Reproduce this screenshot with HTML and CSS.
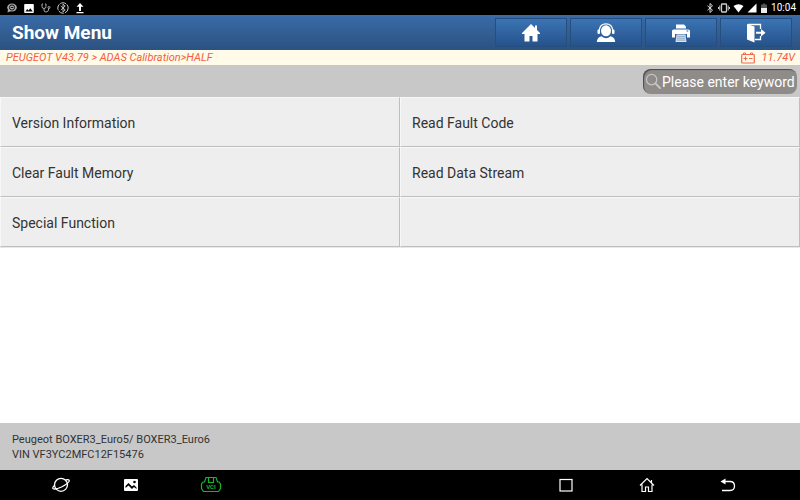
FILE: index.html
```
<!DOCTYPE html>
<html lang="en">
<head>
  <meta charset="UTF-8">
  <meta name="viewport" content="width=device-width, initial-scale=1.0">
  <title>Show Menu</title>
  <link rel="stylesheet" href="styles.css">
</head>
<body>
  <div class="screen">
    <div class="status-bar">
      <div class="status-group notifications">
        <svg width="12" height="12" viewBox="0 0 12 12"><ellipse cx="6" cy="5.5" rx="4.8" ry="4" fill="#aaa"/><path d="M2 7L1.6 10.5L5 9Z" fill="#aaa"/><circle cx="6" cy="5.5" r="2.6" fill="none" stroke="#111"/><path d="M4.8 5.5h2.6" stroke="#111"/></svg>
        <svg width="12" height="12" viewBox="0 0 12 12"><path d="M2 2h8a.8.8 0 0 1 .8.8v7.4a.8.8 0 0 1-.8.8H2a.8.8 0 0 1-.8-.8V2.800A.8.8 0 0 1 2 2zM2.500 9.500h7.200L7.300 6.200L5.500 8.400L4.200 7Z" fill="#fff" fill-rule="evenodd"/></svg>
        <svg width="12" height="12" viewBox="0 0 12 12" fill="none" stroke="#aaa"><path d="M3 2H2v2.500q0 2 2 2t2-2V2H5M4 6.500V8q0 2 2 2t2.500-2V6.500"/><circle cx="9" cy="5.500" r="1"/></svg>
        <svg width="12" height="12" viewBox="0 0 12 12" fill="none" stroke="#ccc"><circle cx="6" cy="6" r="5.200" stroke-dasharray="6 1"/><path d="M3.800 4l4.400 4L6 9.800V2.200L8.200 4L3.800 8" stroke-width=".9"/></svg>
        <svg width="12" height="12" viewBox="0 0 12 12"><path d="M6 1L9.500 4.800H7V9H5V4.800H2.500ZM2.500 10h7v1.200h-7Z" fill="#fff"/></svg>
      </div>
      <div class="status-group">
        <svg width="10" height="12" viewBox="0 0 10 12" fill="none" stroke="#ddd"><path d="M2.500 3.800l5 4.400L5 10.500v-9L7.500 3.800l-5 4.400"/></svg>
        <svg width="12" height="12" viewBox="0 0 12 12" fill="none" stroke="#ccc"><rect x="3.500" y="2" width="5" height="8" rx=".5" stroke-width="1.300"/><path d="M1.800 3.500v5M.5 5v2M10.200 3.500v5M11.500 5v2"/></svg>
        <svg width="11" height="12" viewBox="0 0 11 12"><path d="M.5 4Q5.500 .5 10.500 4L5.500 10.500Z" fill="#fff"/></svg>
        <svg width="10" height="12" viewBox="0 0 10 12"><path d="M9.500 1.500v9h-9Z" fill="#fff"/></svg>
        <svg width="8" height="12" viewBox="0 0 8 12"><path d="M3 1.500h2v1h2V6H1V2.500h2Z" fill="#555"/><path d="M1 6h6v5H1Z" fill="#eee"/></svg>
        <span class="clock">10:04</span>
      </div>
    </div>

    <header class="title-bar">
      <h1>Show Menu</h1>
      <div class="toolbar">
        <button type="button" class="tool-btn" aria-label="Home">
          <svg width="20" height="20" viewBox="0 0 20 20"><path d="M10 1L1 10V11H3.500V18.500H8.500V13H11.500V18.500H16.500V11H19V10L16 7V2.500H14V5Z" fill="#fff"/></svg>
        </button>
        <button type="button" class="tool-btn" aria-label="Support">
          <svg width="20" height="20" viewBox="0 0 20 20"><ellipse cx="10" cy="7.800" rx="5" ry="5.500" fill="#fff"/><path d="M3.300 8V7Q4 .8 10 .8T16.700 7V8" fill="none" stroke="#fff" stroke-width="1.200"/><rect x="1.500" y="6.500" width="2.500" height="4.500" rx="1" fill="#fff"/><rect x="16" y="6.500" width="2.500" height="4.500" rx="1" fill="#fff"/><path d="M.8 19Q1 14.500 5.500 13.300Q10 17 14.500 13.300Q19 14.500 19.200 19Z" fill="#fff"/></svg>
        </button>
        <button type="button" class="tool-btn" aria-label="Print">
          <svg width="20" height="20" viewBox="0 0 20 20"><path d="M5 1.500H13L15 3.500V5.500H5Z" fill="#fff"/><path d="M2.500 6.500H17.500Q19 6.500 19 8V14.500H16V11H4V14.500H1V8Q1 6.500 2.500 6.500Z" fill="#fff"/><path d="M15.500 8h1.800" stroke="#2d5f9c"/><path d="M5.500 11.500H14.500L15.500 19H4.500Z" fill="#dce5ef"/><path d="M6 13.300h8M5.700 15.200h8.600M5.500 17.100h9" stroke="#6686ad" stroke-width=".7"/></svg>
        </button>
        <button type="button" class="tool-btn" aria-label="Exit">
          <svg width="20" height="20" viewBox="0 0 20 20"><path d="M1 1L8.500 3.500V19.500L1 16.500Z" fill="#fff"/><path d="M2 1.500H14.500V6M14.500 13V16.500H9" fill="none" stroke="#fff" stroke-width="1.300"/><path d="M10 8.800H15V6L19.500 9.800L15 13.500V10.800H10Z" fill="#fff"/></svg>
        </button>
      </div>
    </header>

    <div class="path-bar">
      <span>PEUGEOT V43.79 &gt; ADAS Calibration&gt;HALF</span>
      <span class="voltage">
        <svg width="14" height="12" viewBox="0 0 14 12" fill="none" stroke="#f4694b"><rect x=".7" y="2.500" width="12.600" height="8.500" rx=".8" stroke-width="1.200"/><path d="M2.500 2.500V1h2v1.500M9.500 2.500V1h2v1.500M2.500 6.500h4M4.500 4.500v4M8 6.500h3.500"/></svg>
        11.74V
      </span>
    </div>

    <div class="search-bar">
      <label class="search-box">
        <svg width="17" height="17" viewBox="0 0 18 18" fill="none" stroke="#c8c6c4"><circle cx="7" cy="7" r="5.500" stroke-width="1.300"/><path d="M11 11l5 5" stroke-width="2" stroke-linecap="round"/></svg>
        <input type="text" placeholder="Please enter keyword" aria-label="Keyword">
      </label>
    </div>

    <main class="content">
      <div class="menu-grid">
        <button type="button" class="menu-item">Version Information</button>
        <button type="button" class="menu-item">Read Fault Code</button>
        <button type="button" class="menu-item">Clear Fault Memory</button>
        <button type="button" class="menu-item">Read Data Stream</button>
        <button type="button" class="menu-item">Special Function</button>
        <div class="menu-item"></div>
      </div>
    </main>

    <footer class="vehicle-info">
      <p>Peugeot BOXER3_Euro5/ BOXER3_Euro6</p>
      <p>VIN VF3YC2MFC12F15476</p>
    </footer>

    <nav class="nav-bar">
      <div class="nav-group">
        <button type="button" class="nav-btn" aria-label="Browser">
          <svg width="18" height="18" viewBox="0 0 18 18" fill="none" stroke="#fff" stroke-width="1.300"><circle cx="9" cy="8.800" r="6.500"/><path d="M13.500 4Q18 3 17 5.500Q15.500 8 9.500 11Q3 14 1 12.500Q.2 11.500 2.500 9.500"/></svg>
        </button>
        <button type="button" class="nav-btn" aria-label="Gallery">
          <svg width="16" height="16" viewBox="0 0 16 16"><rect x="1" y="2" width="14" height="12" rx="1" fill="#fff"/><path d="M2.500 11V9L5.500 6L9 9.500L11 8L13.500 10.500V12L11 10L9 12L5.500 8.500Z"/><circle cx="11.500" cy="5" r="1.300"/></svg>
        </button>
        <button type="button" class="nav-btn vci-btn" aria-label="VCI">
          <svg width="22" height="18" viewBox="0 0 22 18" fill="none" stroke="#16b52a"><path d="M6 1.500H16L17.500 6H19L20.500 8V12.500L18.500 15.500H3.500L1.500 12.500V8L3 6H4.500Z" stroke-width="1.200"/><path d="M8.500 2V6.500H13.500V2" stroke-width="1.200"/><text class="vci-label" x="11" y="13" text-anchor="middle">VCI</text></svg>
        </button>
      </div>
      <div class="nav-group nav-system">
        <button type="button" class="nav-btn" aria-label="Recent apps">
          <svg width="16" height="16" viewBox="0 0 16 16" fill="none" stroke="#fff" stroke-width="1.200"><rect x="2" y="2.500" width="12" height="11.500"/></svg>
        </button>
        <button type="button" class="nav-btn" aria-label="Home screen">
          <svg width="16" height="16" viewBox="0 0 16 16" fill="none" stroke="#fff" stroke-width="1.200"><path d="M1 8.500L8 1.500L15 8.500M3 7.500V14.500H6.500V10H9.500V14.500H13V7.500M12.500 5.500V3"/></svg>
        </button>
        <button type="button" class="nav-btn" aria-label="Back">
          <svg width="16" height="16" viewBox="0 0 16 16"><path d="M4 4.500H10Q14.500 4.500 14.500 9T10 13.500H2" fill="none" stroke="#fff" stroke-width="1.300"/><path d="M.5 4.500L5.500 1.500V7.500Z" fill="#fff"/></svg>
        </button>
      </div>
    </nav>
  </div>
</body>
</html>
```
FILE: styles.css
```
/* Reset and Base Styles */
* {
  margin: 0;
  padding: 0;
  box-sizing: border-box;
}

body {
  font-family: Roboto, "Liberation Sans", sans-serif;
  color: #333;
  background-color: #fff;
}

button,
input {
  font-family: inherit;
  border: none;
  background: none;
}

button {
  cursor: pointer;
}

svg {
  display: block;
  flex-shrink: 0;
}

.screen {
  display: flex;
  flex-direction: column;
  min-height: 100vh;
}

/* Status Bar */
.status-bar {
  display: flex;
  justify-content: space-between;
  align-items: center;
  height: 15px;
  padding: 0 4px 0 6px;
  background-color: #000;
}

.status-group {
  display: flex;
  align-items: center;
  gap: 3px;
}

.notifications {
  gap: 5px;
}

.clock {
  color: #fff;
  font-size: 10px;
  line-height: 15px;
}

/* Title Bar */
.title-bar {
  display: flex;
  justify-content: space-between;
  align-items: center;
  padding: 3px 8px 3px 12px;
  background: linear-gradient(#3a6ba8, #2b5280);
}

.title-bar h1 {
  color: #fff;
  font-size: 19px;
  font-weight: 700;
  line-height: 29px;
}

.toolbar {
  display: flex;
  gap: 3px;
}

.tool-btn {
  display: flex;
  align-items: center;
  justify-content: center;
  width: 72px;
  height: 29px;
  border: 1px solid #264f7f;
  background: linear-gradient(#3b74b5, #26528a);
}

/* Vehicle Path */
.path-bar {
  display: flex;
  justify-content: space-between;
  padding: 0 5px 0 6px;
  background-color: #fffbe8;
  color: #f4603f;
  font-size: 11px;
  font-style: italic;
  line-height: 15px;
}

.voltage {
  display: flex;
  align-items: center;
  gap: 6px;
}

/* Search */
.search-bar {
  display: flex;
  justify-content: flex-end;
  padding: 4px 3px 3px;
  background-color: #c8c8c8;
}

.search-box {
  display: flex;
  align-items: center;
  width: 154px;
  height: 25px;
  padding-left: 2px;
  border-radius: 8px;
  background-color: #8f8b88;
  box-shadow: inset 1px 1px 1px #4c4a47;
}

.search-box input {
  flex: 1;
  min-width: 0;
  color: #fff;
  font-size: 14px;
  outline: none;
}

.search-box input::placeholder {
  color: #fff;
}

/* Menu */
.content {
  flex: 1;
}

.menu-grid {
  display: grid;
  grid-template-columns: 1fr 1fr;
  border-bottom: 1px solid #e8e8e8;
}

.menu-item {
  min-height: 50px;
  padding: 2px 11px 0;
  border: 1px solid #bebebe;
  border-top-color: #f8f8f8;
  border-left-color: #f8f8f8;
  background-color: #eee;
  color: #333;
  font-size: 14px;
  text-align: left;
}

/* Vehicle Info */
.vehicle-info {
  padding: 9px 12px 8px;
  background-color: #c8c8c8;
  font-size: 11px;
  line-height: 15px;
}

/* Navigation Bar */
.nav-bar {
  display: flex;
  justify-content: space-between;
  height: 30px;
  padding: 0 32px 0 26px;
  background-color: #000;
}

.nav-group {
  display: flex;
}

.nav-btn {
  display: flex;
  align-items: center;
  justify-content: center;
  width: 70px;
}

.vci-btn {
  width: 90px;
}

.vci-label {
  fill: #16b52a;
  stroke: none;
  font-size: 6px;
  font-weight: 700;
}

.nav-system .nav-btn {
  width: 81px;
}
```
